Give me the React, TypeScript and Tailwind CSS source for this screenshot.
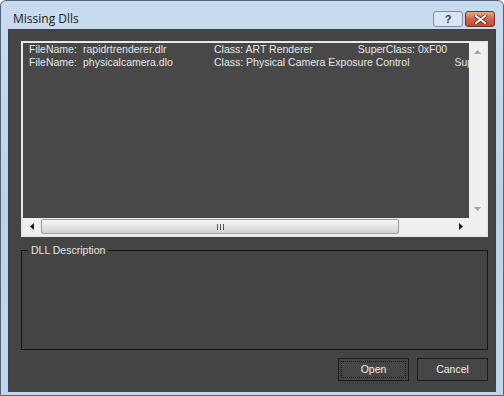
import React from 'react';

const rows = [
  { file: 'rapidrtrenderer.dlr', cls: 'ART Renderer', sup: 'SuperClass: 0xF00' },
  { file: 'physicalcamera.dlo', cls: 'Physical Camera Exposure Control', sup: 'SuperClass: 0xF00' },
];

const Tri = ({ dir, color }: { dir: 'up' | 'down' | 'left' | 'right'; color: string }) => {
  const pts = {
    up: '0,4 3.5,0 7,4',
    down: '0,0 7,0 3.5,4',
    left: '4,0 4,7 0,3.5',
    right: '0,0 0,7 4,3.5',
  }[dir];
  const vert = dir === 'up' || dir === 'down';
  return (
    <svg width={vert ? 7 : 4} height={vert ? 4 : 7} viewBox={vert ? '0 0 7 4' : '0 0 4 7'}>
      <polygon points={pts} fill={color} />
    </svg>
  );
};

const App = () => {
  return (
    <div className="w-[504px] h-[396px] flex flex-col border border-[#55657a] rounded-t-[6px] bg-linear-to-b from-[#c9dbf0] via-[#bdd2ea] to-[#c2d7ee] font-['Liberation_Sans',sans-serif] overflow-hidden">
      {/* Title bar */}
      <div className="h-[28px] flex items-start pl-[12px] pr-[8px] pt-[10px]">
        <span className="text-[12px] leading-[18px] text-[#1b1b1b] font-['Open_Sans',sans-serif] -mt-[1px]">Missing Dlls</span>
        <div className="flex-1" />
        <div className="flex gap-[2px]">
          <div className="w-[30px] h-[16px] rounded-[3px] border border-[#7b8ca3] bg-[#dce6f2] flex items-center justify-center">
            <span className="text-[11px] leading-[11px] font-bold text-[#2a3f62]">?</span>
          </div>
          <div className="w-[30px] h-[16px] rounded-[3px] border border-[#7d2e22] bg-linear-to-b from-[#e8a493] via-[#d2654d] to-[#c24a30] flex items-center justify-center">
            <svg width="13" height="9" viewBox="0 0 13 9">
              <path d="M2 1 L11 8 M11 1 L2 8" stroke="#5a1d14" strokeWidth="3.6" strokeLinecap="round" />
              <path d="M2 1 L11 8 M11 1 L2 8" stroke="#ffffff" strokeWidth="2.2" strokeLinecap="round" />
            </svg>
          </div>
        </div>
      </div>

      {/* Client area */}
      <div className="mx-[7px] mb-[3px] h-[363px] border border-[#3a4450] bg-[#444444] pl-[12px] pr-[7px] pt-[11px] flex flex-col text-[#e6e6e6] text-[10.5px]">
        {/* List box */}
        <div className="h-[196px] border-2 border-[#e8e8e8] grid grid-cols-[minmax(0,1fr)_17px] grid-rows-[minmax(0,1fr)_17px]">
          <div className="bg-[#484848] overflow-hidden">
            {rows.map((r) => (
              <div key={r.file} className="h-[13px] leading-[13px] flex whitespace-nowrap pl-[6px]">
                <span className="w-[54px] shrink-0">FileName:</span>
                <span className="w-[131px] shrink-0">{r.file}</span>
                <span className="shrink-0">Class: {r.cls}</span>
                <span className="shrink-0 ml-[45px]">{r.sup}</span>
              </div>
            ))}
          </div>
          {/* vertical scrollbar */}
          <div className="bg-[#f0f0f0] flex flex-col items-center justify-between py-[7px]">
            <Tri dir="up" color="#a3a3a3" />
            <Tri dir="down" color="#a3a3a3" />
          </div>
          {/* horizontal scrollbar */}
          <div className="bg-[#f0f0f0] flex items-center">
            <div className="w-[17px] flex justify-center">
              <Tri dir="left" color="#1a1a1a" />
            </div>
            <div className="ml-[1px] w-[358px] h-[15px] rounded-[2px] border border-[#9c9c9c] bg-linear-to-b from-[#f6f6f6] via-[#e6e6e6] to-[#d2d2d2] flex items-center justify-center gap-[2px]">
              <div className="w-[1px] h-[6px] bg-[#555]" />
              <div className="w-[1px] h-[6px] bg-[#555]" />
              <div className="w-[1px] h-[6px] bg-[#555]" />
            </div>
            <div className="flex-1" />
            <div className="w-[17px] flex justify-center">
              <Tri dir="right" color="#1a1a1a" />
            </div>
          </div>
          <div className="bg-[#f0f0f0]" />
        </div>

        {/* Group box */}
        <fieldset className="mt-[6px] h-[107px] border border-[#121212]">
          <legend className="ml-[6px] px-[3px] leading-[14px] text-[10.5px] text-[#e6e6e6]">DLL Description</legend>
        </fieldset>

        {/* Buttons */}
        <div className="mt-[8px] flex justify-end gap-[8px]">
          <button className="w-[71px] h-[23px] border border-[#1c1c1c] bg-[#464646] p-[2px]">
            <div className="w-full h-full border border-dotted border-[#101010] flex items-center justify-center text-[#eeeeee]">Open</div>
          </button>
          <button className="w-[71px] h-[23px] border border-[#1c1c1c] bg-[#464646] flex items-center justify-center text-[#eeeeee]">
            Cancel
          </button>
        </div>
      </div>
    </div>
  );
};

export default App;
